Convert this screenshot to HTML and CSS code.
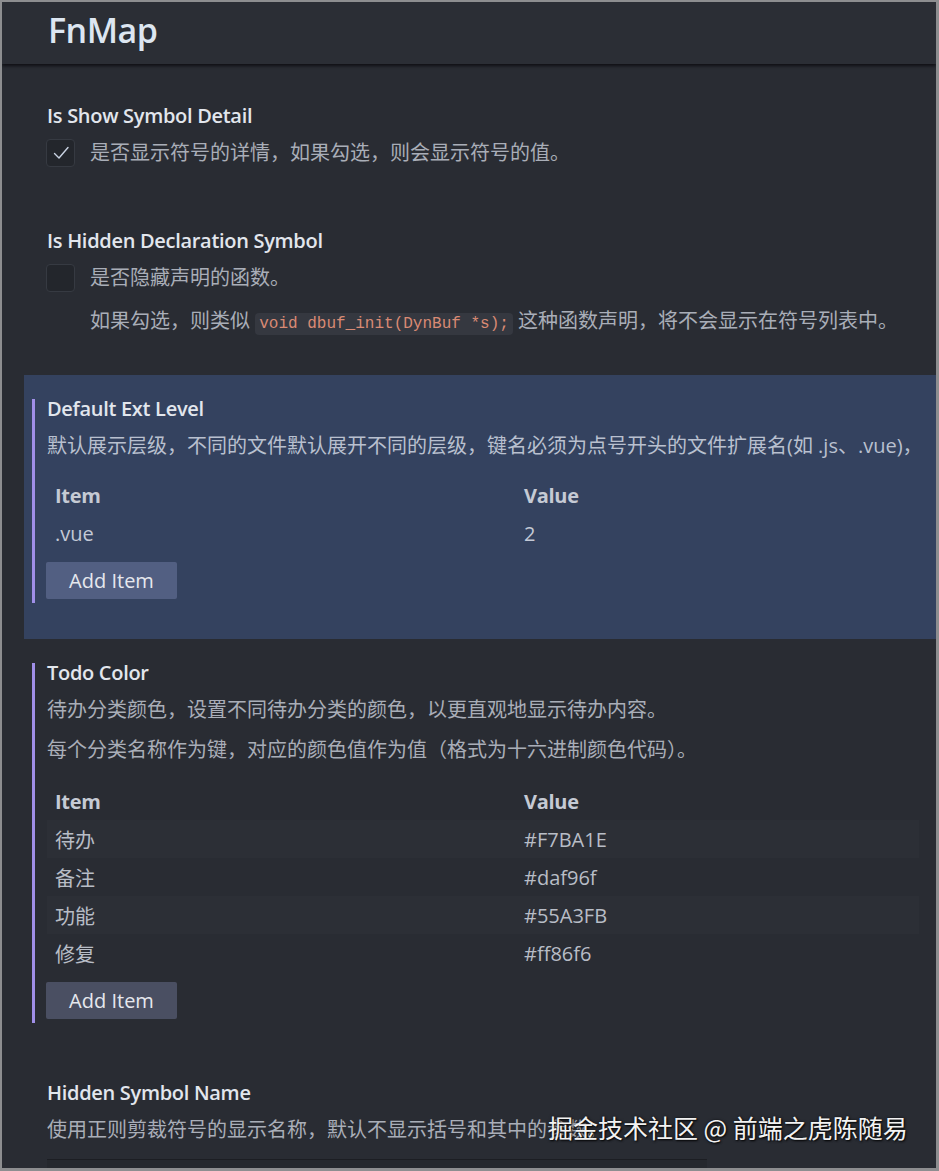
FILE: index.html
```html
<!DOCTYPE html>
<html lang="zh-CN">
<head>
<meta charset="utf-8">
<title>FnMap Settings</title>
<link rel="stylesheet" href="styles.css">
</head>
<body>
<div class="window">
  <header class="header"><h1 class="title">FnMap</h1></header>
  <div class="list">
    <section class="item">
      <div class="body">
        <div class="label">Is Show Symbol Detail</div>
        <div class="check-row">
          <span class="checkbox"><svg width="20" height="20" viewBox="0 0 20 20"><path d="M3.5 10.5 L8 15 L17 4.5" fill="none" stroke="#c9d3e3" stroke-width="1.4" stroke-linecap="round" stroke-linejoin="round"/></svg></span>
          <span class="desc">是否显示符号的详情，如果勾选，则会显示符号的值。</span>
        </div>
      </div>
    </section>
    <section class="item">
      <div class="body">
        <div class="label">Is Hidden Declaration Symbol</div>
        <div class="check-row">
          <span class="checkbox"></span>
          <span class="desc">是否隐藏声明的函数。</span>
        </div>
        <p class="desc extra">如果勾选，则类似 <code class="code">void dbuf_init(DynBuf *s);</code> 这种函数声明，将不会显示在符号列表中。</p>
      </div>
    </section>
    <section class="item focused">
      <div class="body modified">
        <div class="label">Default Ext Level</div>
        <p class="desc first nowrap">默认展示层级，不同的文件默认展开不同的层级，键名必须为点号开头的文件扩展名(如 .js、.vue)，</p>
        <div class="table t-focused">
          <div class="row head"><span class="cell">Item</span><span class="cell">Value</span></div>
          <div class="row"><span class="cell">.vue</span><span class="cell">2</span></div>
        </div>
        <button class="btn">Add Item</button>
      </div>
    </section>
    <section class="item">
      <div class="body modified">
        <div class="label">Todo Color</div>
        <p class="desc first">待办分类颜色，设置不同待办分类的颜色，以更直观地显示待办内容。</p>
        <p class="desc second">每个分类名称作为键，对应的颜色值作为值（格式为十六进制颜色代码）。</p>
        <div class="table t-todo">
          <div class="row head"><span class="cell">Item</span><span class="cell">Value</span></div>
          <div class="row"><span class="cell">待办</span><span class="cell">#F7BA1E</span></div>
          <div class="row"><span class="cell">备注</span><span class="cell">#daf96f</span></div>
          <div class="row"><span class="cell">功能</span><span class="cell">#55A3FB</span></div>
          <div class="row"><span class="cell">修复</span><span class="cell">#ff86f6</span></div>
        </div>
        <button class="btn">Add Item</button>
      </div>
    </section>
    <section class="item">
      <div class="body">
        <div class="label">Hidden Symbol Name</div>
        <p class="desc first">使用正则剪裁符号的显示名称，默认不显示括号和其中的参数。</p>
        <div class="input"></div>
      </div>
    </section>
  </div>
  <div class="watermark">掘金技术社区 @ 前端之虎陈随易</div>
</div>
</body>
</html>
```

FILE: styles.css
```css
html, body {
  margin: 0;
  padding: 0;
}
body {
  background: #8d8e90;
  width: 939px;
  height: 1171px;
  overflow: hidden;
  font-family: "Open Sans", "Noto Sans CJK SC", sans-serif;
}
.window {
  position: relative;
  margin: 2px 3px 0 2px;
  width: 934px;
  height: 1166px;
  background: #292c33;
  overflow: hidden;
}
.header {
  box-sizing: border-box;
  height: 62px;
  background: #2b2e35;
  box-shadow: 0 2px 3px rgba(10, 11, 14, 0.85);
  padding: 0 0 6px 46px;
  display: flex;
  align-items: center;
  position: relative;
  z-index: 1;
}
.title {
  margin: 0;
  font-size: 34px;
  font-weight: 600;
  color: #dde6f1;
  line-height: 40px;
  letter-spacing: -0.5px;
}
.list {
  padding: 18px 0 0 22px;
}
.item {
  padding: 24px 0 36px 0;
}
.item.focused {
  background: #34425f;
}
.body {
  margin-left: 8px;
  border-left: 3px solid transparent;
  padding: 0 0 4px 12px;
}
.body.modified {
  border-left-color: #a08fe8;
}
.label {
  font-size: 20px;
  font-weight: 600;
  line-height: 20px;
  color: #e2e6ed;
  letter-spacing: -0.3px;
}
.check-row {
  display: flex;
  align-items: center;
  gap: 15px;
  margin-top: 13px;
  height: 28px;
}
.checkbox {
  box-sizing: border-box;
  width: 29px;
  height: 28px;
  margin-left: -1px;
  background: #23262c;
  border: 1px solid #363a42;
  border-radius: 4px;
  display: flex;
  align-items: center;
  justify-content: center;
}
.desc {
  margin: 0;
  font-size: 20px;
  line-height: 28px;
  color: #a9aeb8;
}
.focused .desc {
  color: #b9c0cf;
}
.extra {
  margin-top: 15px;
  padding-left: 43px;
}
.first {
  margin-top: 13px;
}
.second {
  margin-top: 12px;
}
.nowrap {
  white-space: nowrap;
}
.code {
  font-family: "Liberation Mono", "DejaVu Sans Mono", monospace;
  font-size: 16px;
  line-height: 20px;
  color: #d98a74;
  background: #353840;
  border-radius: 4px;
  padding: 2px 4px;
}
.table {
  width: 872px;
}
.t-focused {
  margin-top: 16px;
}
.t-todo {
  margin-top: 18px;
}
.row {
  display: grid;
  grid-template-columns: 469px 1fr;
  height: 38px;
  align-items: center;
}
.t-todo .row:nth-child(even) {
  background: rgba(255, 255, 255, 0.014);
}
.cell {
  padding-left: 8px;
  font-size: 20px;
  color: #b8bdc6;
}
.focused .cell {
  color: #c3c9d6;
}
.head .cell {
  font-weight: 700;
  color: #c5cad4;
  letter-spacing: -0.3px;
}
.btn {
  display: block;
  margin: 10px 0 0 -1px;
  width: 131px;
  height: 37px;
  border: none;
  border-radius: 2px;
  background: rgba(168, 174, 225, 0.27);
  color: #e6e8ee;
  font-family: "Open Sans", "Noto Sans CJK SC", sans-serif;
  font-size: 20px;
  padding: 0;
}
.input {
  margin-top: 15px;
  width: 660px;
  height: 30px;
  border-top: 1px solid #1c1e23;
  background: #25282e;
}
.watermark {
  position: absolute;
  left: 546px;
  top: 1109px;
  font-family: "Noto Sans CJK SC", sans-serif;
  font-size: 25px;
  line-height: 32px;
  color: #f2f2f2;
  text-shadow: 1px 1px 2px rgba(0, 0, 0, 0.9), 0 0 3px rgba(0, 0, 0, 0.6);
  white-space: nowrap;
}
```
